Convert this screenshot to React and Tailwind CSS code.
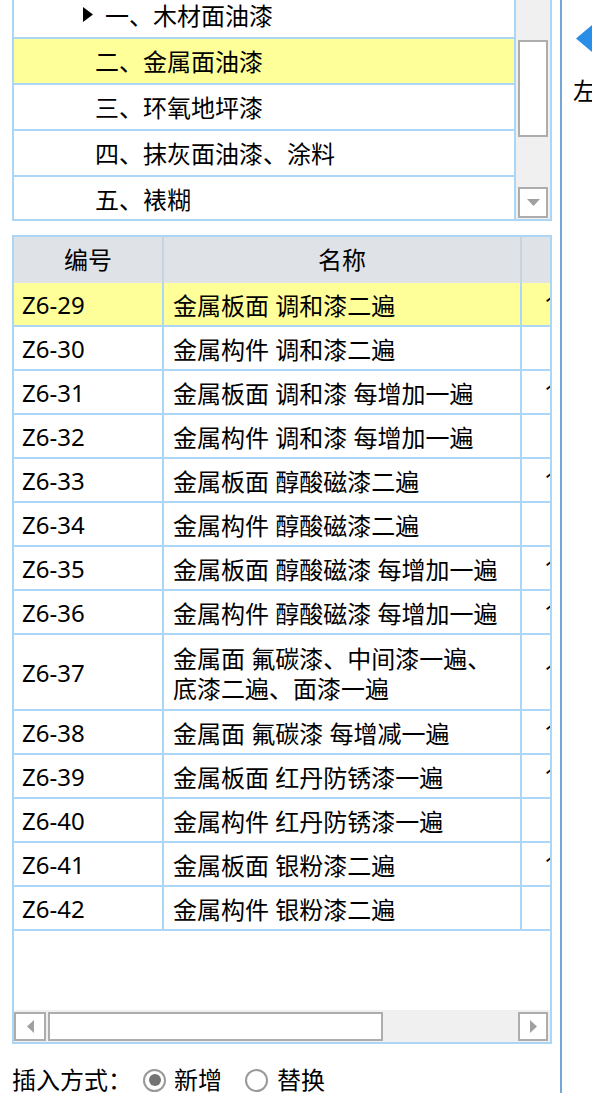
import React from "react";

const groups = [
    { label: "一、木材面油漆", parent: true },
    { label: "二、金属面油漆", active: true },
    { label: "三、环氧地坪漆" },
    { label: "四、抹灰面油漆、涂料" },
    { label: "五、裱糊" },
];

const rows = [
    { code: "Z6-29", name: "金属板面 调和漆二遍", unit: "1", active: true },
    { code: "Z6-30", name: "金属构件 调和漆二遍", unit: "" },
    { code: "Z6-31", name: "金属板面 调和漆 每增加一遍", unit: "1" },
    { code: "Z6-32", name: "金属构件 调和漆 每增加一遍", unit: "" },
    { code: "Z6-33", name: "金属板面 醇酸磁漆二遍", unit: "1" },
    { code: "Z6-34", name: "金属构件 醇酸磁漆二遍", unit: "" },
    { code: "Z6-35", name: "金属板面 醇酸磁漆 每增加一遍", unit: "1" },
    { code: "Z6-36", name: "金属构件 醇酸磁漆 每增加一遍", unit: "1" },
    { code: "Z6-37", name: ["金属面 氟碳漆、中间漆一遍、", "底漆二遍、面漆一遍"], unit: "1" },
    { code: "Z6-38", name: "金属面 氟碳漆 每增减一遍", unit: "1" },
    { code: "Z6-39", name: "金属板面 红丹防锈漆一遍", unit: "1" },
    { code: "Z6-40", name: "金属构件 红丹防锈漆一遍", unit: "" },
    { code: "Z6-41", name: "金属板面 银粉漆二遍", unit: "1" },
    { code: "Z6-42", name: "金属构件 银粉漆二遍", unit: "" },
];

function Radio({ checked }) {
    return (
        <span className="w-[23px] h-[23px] rounded-full border-2 border-[#999999] bg-white flex items-center justify-center">
            {checked && <span className="w-[12px] h-[12px] rounded-full bg-[#737373]" />}
        </span>
    );
}

export default function App() {
    return (
        <div className="h-[1099px] overflow-hidden bg-white text-black text-[24px] font-['Noto_Sans','Noto_Sans_CJK_SC',sans-serif] flex">

            {/* LEFT COLUMN */}
            <div className="w-[552px] pl-[12px] flex flex-col">

                {/* CATEGORY LIST */}
                <div className="h-[221px] border-x-2 border-b-2 border-[#abd6f6] flex overflow-hidden">
                    <div className="flex-1 border-r-2 border-[#abd6f6] overflow-hidden">
                        <div className="-mt-[7px]">
                            {groups.map((g) => (
                                <div
                                    key={g.label}
                                    className={`h-[46px] border-b-2 border-[#abd6f6] flex items-center whitespace-nowrap ${g.active ? "bg-[#ffff99]" : "bg-white"} ${g.parent ? "pl-[69px]" : "pl-[81px]"}`}
                                >
                                    {g.parent && (
                                        <svg width="10" height="15" viewBox="0 0 10 15" className="mr-[12px] mt-[-2px]">
                                            <path d="M0 0 L10 7.5 L0 15 Z" fill="#000" />
                                        </svg>
                                    )}
                                    <span className="leading-[30px] pt-[1px]">{g.label}</span>
                                </div>
                            ))}
                        </div>
                    </div>
                    {/* vertical scrollbar */}
                    <div className="w-[34px] bg-[#f0f0f0] flex flex-col items-center pt-[40px] pb-[1px]">
                        <div className="w-[30px] h-[97px] border-2 border-[#adadad] bg-white" />
                        <div className="flex-1" />
                        <div className="w-[30px] h-[31px] border-2 border-[#adadad] bg-white flex items-center justify-center">
                            <svg width="13" height="7" viewBox="0 0 13 7">
                                <path d="M0 0 L13 0 L6.5 7 Z" fill="#a0a0a0" />
                            </svg>
                        </div>
                    </div>
                </div>

                {/* ITEM TABLE */}
                <div className="mt-[14px] h-[809px] border-2 border-[#abd6f6] flex flex-col overflow-hidden">
                    <div className="h-[46px] bg-[#dfe2e7] flex shrink-0">
                        <div className="w-[150px] border-r-2 border-[#c9d3de] flex items-center justify-center leading-[30px]">编号</div>
                        <div className="w-[358px] border-r-2 border-[#c9d3de] flex items-center justify-center leading-[30px]">名称</div>
                        <div className="flex-1" />
                    </div>

                    {rows.map((r) => (
                        <div
                            key={r.code}
                            className={`flex shrink-0 border-b-2 border-[#abd6f6] ${r.active ? "bg-[#ffff99]" : "bg-white"}`}
                        >
                            <div className="w-[150px] shrink-0 border-r-2 border-[#abd6f6] pl-[8px] pt-[2px] flex items-center leading-[30px]">
                                {r.code}
                            </div>
                            <div className={`w-[358px] shrink-0 border-r-2 border-[#abd6f6] pl-[9px] flex items-center leading-[30px] whitespace-nowrap ${Array.isArray(r.name) ? "pt-[9px] pb-[5px]" : "pt-[8px] pb-[4px]"}`}>
                                {Array.isArray(r.name) ? (
                                    <span>
                                        {r.name[0]}
                                        <br />
                                        {r.name[1]}
                                    </span>
                                ) : (
                                    r.name
                                )}
                            </div>
                            <div className="flex-1 min-w-0 overflow-hidden pl-[22px] pt-[2px] flex items-center leading-[30px] whitespace-nowrap">
                                {r.unit}
                            </div>
                        </div>
                    ))}

                    <div className="flex-1 bg-white" />

                    {/* horizontal scrollbar */}
                    <div className="h-[32px] bg-[#f0f0f0] flex items-center shrink-0">
                        <div className="w-[32px] h-[29px] border-2 border-[#adadad] bg-white flex items-center justify-center">
                            <svg width="7" height="13" viewBox="0 0 7 13">
                                <path d="M7 0 L7 13 L0 6.5 Z" fill="#a0a0a0" />
                            </svg>
                        </div>
                        <div className="ml-[2px] w-[335px] h-[29px] border-2 border-[#adadad] bg-white" />
                        <div className="flex-1" />
                        <div className="mr-[2px] w-[30px] h-[29px] border-2 border-[#adadad] bg-white flex items-center justify-center">
                            <svg width="7" height="13" viewBox="0 0 7 13">
                                <path d="M0 0 L7 6.5 L0 13 Z" fill="#a0a0a0" />
                            </svg>
                        </div>
                    </div>
                </div>

                {/* INSERT MODE */}
                <div className="mt-[21px] flex items-center leading-[30px] whitespace-nowrap">
                    <span>插入方式：</span>
                    <span className="ml-[11px]"><Radio checked /></span>
                    <span className="ml-[8px]">新增</span>
                    <span className="ml-[23px]"><Radio /></span>
                    <span className="ml-[9px]">替换</span>
                </div>
            </div>

            {/* SPLITTER */}
            <div className="ml-[8px] w-[2px] h-[1093px] bg-[#74a7d6]" />

            {/* RIGHT PANEL (clipped) */}
            <div className="w-[30px] overflow-hidden flex flex-col">
                <svg width="16" height="27" viewBox="0 0 16 27" className="ml-[14px] mt-[25px] shrink-0">
                    <path d="M0 13.5 L16 0 L16 27 Z" fill="#2a8ee8" />
                </svg>
                <div className="ml-[11px] mt-[24px] leading-[30px] whitespace-nowrap">左</div>
            </div>
        </div>
    );
}
